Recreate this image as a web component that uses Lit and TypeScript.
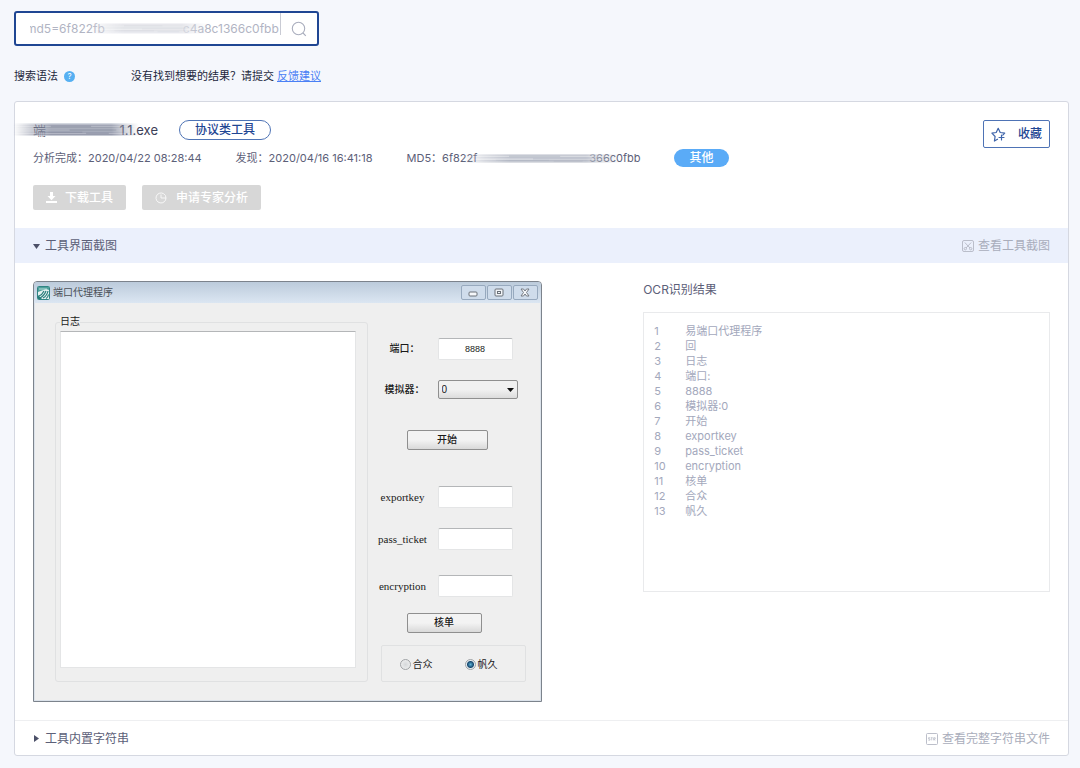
import { LitElement, html, css, svg } from "lit";
import { customElement, property } from "lit/decorators.js";

const OCR_LINES = [
  "易端口代理程序",
  "回",
  "日志",
  "端口:",
  "8888",
  "模拟器:0",
  "开始",
  "exportkey",
  "pass_ticket",
  "encryption",
  "核单",
  "合众",
  "帆久",
];

const base = css`
  *,
  *::before,
  *::after {
    box-sizing: border-box;
  }
  button,
  input,
  select,
  textarea {
    font: inherit;
    color: inherit;
    margin: 0;
    border-radius: 0;
    outline: none;
  }
  svg {
    display: block;
    flex: none;
  }
`;

/* Horizontal brush streaks that cover a redacted part of a string. */
@customElement("redaction-streak")
export class RedactionStreak extends LitElement {
  static styles = css`
    :host {
      display: block;
      pointer-events: none;
    }
    svg {
      display: block;
      width: 100%;
      height: 100%;
    }
  `;

  @property() tone = "dark";

  render() {
    const palettes: Record<string, string[]> = {
      dark: ["#d3d7df", "#b3b8c5", "#9499aa", "#a8adbb", "#7f8598", "#9fa5b4", "#8b90a3", "#a4a9b8", "#858b9e", "#b4b9c6", "#9297a8", "#c6cad4"],
      mid: ["#dfe1e7", "#c3c6d0", "#b4b8c4", "#d2d5dc", "#aeb3c0", "#ced1d9", "#babecb", "#d4d6dd", "#a9aebc", "#c0c4ce", "#b0b5c2", "#d9dbe1"],
      light: ["#f3f3f6", "#e7e8ec", "#dedfe5", "#e9eaee", "#d9dbe1", "#e1e2e7", "#dcdde3", "#ecedf0", "#d8dae0", "#e4e5ea", "#e8e9ed", "#f5f5f8"],
    };
    const colors = palettes[this.tone];
    return html`<svg viewBox="0 0 100 12" preserveAspectRatio="none" aria-hidden="true">
      <defs>
        <linearGradient id="f">
          <stop offset="0" stop-color="#fff" stop-opacity="0"></stop>
          <stop offset=".15" stop-color="#fff" stop-opacity=".6"></stop>
          <stop offset=".3" stop-color="#fff"></stop>
          <stop offset=".78" stop-color="#fff"></stop>
          <stop offset="1" stop-color="#fff" stop-opacity="0"></stop>
        </linearGradient>
        <mask id="m"><rect width="100" height="12" fill="url(#f)"></rect></mask>
      </defs>
      <g mask="url(#m)">
        ${colors.map((c, i) => svg`<rect x="0" y=${i} width="100" height="1.1" fill=${c}></rect>`)}
        <path d="M30 3H62M45 6.5H82M22 8.5H55M58 9.5H76" stroke=${colors[4]} stroke-width=".5"></path>
      </g>
    </svg>`;
  }
}

/* The captured window of the analysed program. */
@customElement("captured-window")
export class CapturedWindow extends LitElement {
  static styles = [
    base,
    css`
      :host {
        display: block;
        font: 10px/14px "Liberation Serif", "Noto Sans CJK SC", serif;
        color: #1a1a1a;
      }
      .window {
        border: 1px solid #7c838c;
        border-radius: 4px 4px 0 0;
        background: #efefef;
        box-shadow: inset 0 0 0 1px #dbe2ea;
      }
      .titlebar {
        height: 21px;
        display: flex;
        align-items: center;
        gap: 3px;
        padding: 0 3px;
        border-radius: 3px 3px 0 0;
        background: linear-gradient(#bccbdb, #dbe6f2);
        color: #4b5158;
      }
      .name {
        flex: 1;
      }
      .caption {
        display: flex;
        gap: 1px;
      }
      .caption button {
        width: 25px;
        height: 15px;
        display: grid;
        place-items: center;
        padding: 0;
        border: 1px solid #97a9be;
        border-radius: 2px;
        background: #cfdceb;
      }
      .body {
        display: grid;
        grid-template-columns: minmax(0, 1fr) 169px;
        column-gap: 4px;
        padding: 0 0 19px 21px;
      }
      .log {
        min-width: 0;
        margin: 12px 0 0;
        padding: 2px 11px 13px 4px;
        border: 1px solid #e0e1e2;
        border-radius: 3px;
      }
      .log legend {
        padding: 0;
        height: 14px;
      }
      .log textarea {
        display: block;
        width: 100%;
        height: 337px;
        resize: none;
        border: 1px solid #e4e5e6;
        border-top-color: #b4b6b8;
        background: #fff;
      }
      .form {
        display: grid;
        grid-template-rows: 42px 50px 56px 42px 47px 38px 32px 37px;
        padding-top: 35px;
      }
      .field {
        display: grid;
        grid-template-columns: 62px 80px;
        column-gap: 4px;
        align-items: center;
        align-self: start;
      }
      .field label {
        text-align: center;
        white-space: nowrap;
        font-weight: 500;
      }
      .cjk {
        padding-left: 4px;
      }
      .latin {
        font-size: 11px;
      }
      .field input {
        width: 75px;
        height: 22px;
        padding: 0;
        text-align: center;
        font-family: "Liberation Sans", sans-serif;
        font-size: 9px;
        border: 1px solid #e4e5e6;
        border-top-color: #b4b6b8;
        border-radius: 2px;
        background: #fff;
      }
      .pick {
        display: grid;
        align-items: center;
      }
      .pick > * {
        grid-area: 1 / 1;
      }
      .pick select {
        appearance: none;
        height: 19px;
        padding: 0 3px;
        border: 1px solid #8f8f8f;
        border-radius: 2px;
        background: linear-gradient(#f1f1f1 50%, #dcdcdc);
        font-family: "Liberation Sans", sans-serif;
      }
      .pick svg {
        justify-self: end;
        margin-right: 4px;
        pointer-events: none;
      }
      .push {
        justify-self: start;
        align-self: start;
        width: 81px;
        height: 20px;
        margin-left: 35px;
        padding: 0;
        border: 1px solid #8f8f8f;
        border-radius: 2px;
        background: linear-gradient(#f3f3f3 50%, #d9d9d9);
        font-weight: 500;
      }
      .narrow {
        width: 75px;
      }
      .choices {
        display: flex;
        align-items: center;
        gap: 32px;
        margin: 0 15px 0 9px;
        padding: 2px 0 0 18px;
        border: 1px solid #e0e1e2;
        border-radius: 2px;
      }
      .choices label {
        display: flex;
        align-items: center;
        gap: 2px;
      }
      .choices input {
        appearance: none;
        width: 11px;
        height: 11px;
        border: 1px solid #a0a3a6;
        border-radius: 50%;
        background: radial-gradient(#d5d8da, #f4f4f4);
      }
      .choices input:checked {
        background: radial-gradient(circle, #5fb4d8 0, #17486f 3px, #e8eef2 4px);
      }
    `,
  ];

  render() {
    return html`<div class="window">
      <div class="titlebar">
        <svg width="13" height="14" viewBox="0 0 13 14" aria-hidden="true">
          <rect x=".5" y=".5" width="12" height="13" rx="1" fill="#e5f2f0" stroke="#2f8583"></rect>
          <path d="M1 1h11v3L9 3 1 6z" fill="#4f9f9b"></path>
          <path d="M2 3h8" stroke="#b9dfda"></path>
          <path d="M2 10q3-1 5-5M3 12q4-2 6-7M6 12q4-2 5-7M9 12.500q2-1 2.500-4" fill="none" stroke="#277d7b" stroke-width="1.200"></path>
          <path d="M1 9v4h4z" fill="#277d7b"></path>
        </svg>
        <span class="name">端口代理程序</span>
        <div class="caption">
          <button type="button" aria-label="最小化">
            <svg width="10" height="9"><rect x="1" y="4" width="8" height="4" rx="1" fill="#f6f8fb" stroke="#6b7178"></rect></svg>
          </button>
          <button type="button" aria-label="最大化">
            <svg width="10" height="9"><rect x="1" y="1" width="8" height="7" rx="1" fill="#f0f3f7" stroke="#6b7178"></rect><rect x="3.500" y="3.500" width="3" height="2" fill="#f0f3f7" stroke="#6b7178"></rect></svg>
          </button>
          <button type="button" aria-label="关闭">
            <svg width="10" height="9"><path d="M1 1h2.500L5 3l1.500-2H9L6.500 4.500 9 8H6.500L5 6 3.500 8H1l2.500-3.500z" fill="#f6f8fb" stroke="#6b7178" stroke-width=".9"></path></svg>
          </button>
        </div>
      </div>
      <div class="body">
        <fieldset class="log">
          <legend>日志</legend>
          <textarea aria-label="日志"></textarea>
        </fieldset>
        <div class="form">
          <div class="field"><label class="cjk" for="port">端口：</label><input id="port" value="8888" /></div>
          <div class="field">
            <label class="cjk" for="emu">模拟器：</label>
            <div class="pick">
              <select id="emu"><option>0</option></select>
              <svg width="7" height="4" aria-hidden="true"><path d="M0 0h7L3.500 4z" fill="#111"></path></svg>
            </div>
          </div>
          <button class="push" type="button">开始</button>
          <div class="field"><label class="latin" for="ek">exportkey</label><input id="ek" /></div>
          <div class="field"><label class="latin" for="pt">pass_ticket</label><input id="pt" /></div>
          <div class="field"><label class="latin" for="en">encryption</label><input id="en" /></div>
          <button class="push narrow" type="button">核单</button>
          <div class="choices">
            <label><input type="radio" name="c" />合众</label>
            <label><input type="radio" name="c" checked />帆久</label>
          </div>
        </div>
      </div>
    </div>`;
  }
}

@customElement("app-root")
export class AppRoot extends LitElement {
  static styles = [
    base,
    css`
      :host {
        display: block;
        min-height: 100vh;
        padding: 11px 11px 12px 14px;
        background: #f5f7fc;
        color: #5c6078;
        font: 11px/20px Inter, "Noto Sans CJK SC", sans-serif;
      }
      .search {
        position: relative;
        display: flex;
        width: 305px;
        height: 35px;
        border: 2px solid #1f4693;
        border-radius: 3px;
        background: #fff;
        color: #b1b4c3;
      }
      .clip {
        flex: 1;
        min-width: 0;
        margin-left: 14px;
        overflow: hidden;
      }
      .clip input {
        width: 100%;
        height: 31px;
        padding: 0;
        border: 0;
        background: none;
        font-size: 12px;
        text-indent: -4px;
      }
      .search::after {
        content: "";
        position: absolute;
        top: 0;
        right: 36px;
        width: 1px;
        height: 22px;
        background: #c9cbd4;
      }
      .search redaction-streak {
        position: absolute;
        left: 72px;
        top: 10px;
        width: 120px;
        height: 11px;
      }
      .search button {
        width: 36px;
        display: grid;
        place-items: center;
        padding: 0;
        border: 0;
        background: none;
      }
      .hints {
        display: flex;
        align-items: center;
        margin: 20px 0 15px;
        color: #23273c;
      }
      .help {
        width: 11px;
        height: 11px;
        margin: 0 56px 0 6px;
        padding: 0;
        border: 0;
        border-radius: 50%;
        background: #56b0f2;
        color: #fff;
        font-size: 8px;
        line-height: 11px;
      }
      .hints a {
        margin-left: 3px;
        color: #4a80f5;
        text-decoration: underline;
      }
      .card {
        border: 1px solid #d5d8e1;
        border-radius: 3px;
        background: #fff;
      }
      .head {
        display: flex;
        justify-content: space-between;
        align-items: flex-start;
        padding: 18px;
      }
      .title {
        display: flex;
        align-items: center;
        gap: 21px;
        height: 20px;
        margin-bottom: 8px;
      }
      h1 {
        position: relative;
        display: flex;
        justify-content: space-between;
        width: 125px;
        margin: 0;
        font-size: 13px;
        font-weight: 400;
        color: #3c4058;
      }
      h1 redaction-streak {
        position: absolute;
        left: -20px;
        top: 3px;
        width: 126px;
        height: 13px;
      }
      .kind {
        padding: 0 15px;
        border: 1px solid #4e73b5;
        border-radius: 10px;
        color: #1f4693;
        font-size: 12px;
        line-height: 18px;
        font-weight: 500;
      }
      .meta {
        display: flex;
        flex-wrap: wrap;
        gap: 34px;
        margin-bottom: 17px;
      }
      .hash {
        position: relative;
        display: flex;
        gap: 112px;
      }
      .hash redaction-streak {
        position: absolute;
        left: 54px;
        top: 6px;
        width: 160px;
        height: 9px;
      }
      .other {
        align-self: center;
        padding: 0 15px;
        border-radius: 9px;
        background: #5aabf7;
        color: #fff;
        font-size: 12px;
        line-height: 18px;
        font-weight: 500;
      }
      .actions {
        display: flex;
        gap: 16px;
      }
      .actions button {
        display: flex;
        align-items: center;
        gap: 8px;
        height: 25px;
        padding: 0 13px;
        border: 0;
        border-radius: 2px;
        background: #d7d7d7;
        color: #fff;
        font-size: 12px;
        font-weight: 500;
      }
      .favorite {
        display: flex;
        align-items: center;
        gap: 12px;
        height: 28px;
        padding: 0 7px;
        border: 1px solid #4e73b5;
        border-radius: 2px;
        background: #fff;
        color: #1f4693;
        font-size: 12px;
        font-weight: 500;
      }
      .bar {
        display: flex;
        justify-content: space-between;
        align-items: center;
        height: 35px;
        padding: 1px 18px 0;
        font-size: 12px;
      }
      .open {
        background: #ebf0fc;
      }
      .closed {
        border-top: 1px solid #eeeff1;
      }
      .bar h2 {
        margin: 0;
        font-size: 12px;
        font-weight: 400;
      }
      .bar button {
        display: flex;
        align-items: center;
        gap: 5px;
        padding: 0;
        border: 0;
        background: none;
      }
      .bar a {
        display: flex;
        align-items: center;
        gap: 4px;
        color: #a9adbb;
        text-decoration: none;
      }
      .content {
        display: grid;
        grid-template-columns: minmax(0, 5fr) minmax(0, 4fr);
        column-gap: 10%;
        padding: 18px;
      }
      h3 {
        margin: 0 0 13px;
        font-size: 12px;
        line-height: 18px;
        font-weight: 400;
      }
      .ocr {
        list-style: none;
        min-height: 280px;
        margin: 0;
        padding: 11px 10px;
        border: 1px solid #e9eaec;
        line-height: 15px;
        color: #a3a8bc;
      }
      .ocr li {
        display: grid;
        grid-template-columns: 31px 1fr;
      }
    `,
  ];

  render() {
    return html`
      <form class="search" role="search" @submit=${(e: Event) => e.preventDefault()}>
        <div class="clip">
          <input aria-label="搜索" value=${"md5=6f822fb" + "\u2003".repeat(6) + "\u2002c4a8c1366c0fbb"} />
        </div>
        <redaction-streak tone="light"></redaction-streak>
        <button aria-label="搜索">
          <svg width="16" height="16" viewBox="0 0 16 16" fill="none" stroke="#a9adbd" stroke-width="1.100">
            <circle cx="7.500" cy="7.500" r="6.200"></circle>
            <path d="M12 12l2.800 2.800"></path>
          </svg>
        </button>
      </form>
      <div class="hints">
        <span>搜索语法</span>
        <button class="help" aria-label="帮助">?</button>
        <span>没有找到想要的结果？请提交</span>
        <a href="#feedback">反馈建议</a>
      </div>
      <main class="card">
        <header class="head">
          <div>
            <div class="title">
              <h1><span>端</span><span>1.1.exe</span><redaction-streak></redaction-streak></h1>
              <span class="kind">协议类工具</span>
            </div>
            <div class="meta">
              <span>分析完成：2020/04/22 08:28:44</span>
              <span>发现：2020/04/16 16:41:18</span>
              <span class="hash"><span>MD5：6f822f</span><span>366c0fbb</span><redaction-streak tone="mid"></redaction-streak></span>
              <span class="other">其他</span>
            </div>
            <div class="actions">
              <button type="button">
                <svg width="11" height="11" viewBox="0 0 11 11" fill="#fff">
                  <path d="M4 0h3v4h2.500L5.500 8.200 1.500 4H4zM0 9h11v2H0z"></path>
                </svg>
                下载工具
              </button>
              <button type="button">
                <svg width="13" height="12" viewBox="0 0 13 12" fill="none" stroke="#fff" stroke-width=".8">
                  <path d="M8.600 1.700A5 5 0 1 0 11 6H6V2.500"></path>
                  <path d="M8.600 1.700A5 5 0 0 1 11 6"></path>
                </svg>
                申请专家分析
              </button>
            </div>
          </div>
          <button class="favorite" type="button">
            <svg width="15" height="15" viewBox="0 0 15 15" fill="none" stroke="#3e64aa" stroke-width="1.200" stroke-linejoin="round" stroke-linecap="round">
              <path d="M6.500 12.200L3.400 14l.700-4.500L.900 6.200l4.300-.700L7.200 1.300l2 4.200 4.500.700-1.900 2"></path>
              <path d="M10.500 8v5M8 10.500h5"></path>
            </svg>
            收藏
          </button>
        </header>
        <section>
          <div class="bar open">
            <h2>
              <button type="button" aria-expanded="true">
                <svg width="7" height="6"><path d="M0 1h7L3.500 6z" fill="#4c5068"></path></svg>
                工具界面截图
              </button>
            </h2>
            <a href="#shots">
              <svg width="12" height="12" viewBox="0 0 12 12" fill="none" stroke="#b4b8c4" stroke-width=".9">
                <rect x=".5" y=".5" width="11" height="11" rx="1.500"></rect>
                <path d="M2.800 2.500L8 8M9.200 2.500L4 8"></path>
                <circle cx="3.300" cy="8.700" r="1.200"></circle>
                <circle cx="8.700" cy="8.700" r="1.200"></circle>
              </svg>
              查看工具截图
            </a>
          </div>
          <div class="content">
            <captured-window></captured-window>
            <div>
              <h3>OCR识别结果</h3>
              <ol class="ocr">
                ${OCR_LINES.map((line, i) => html`<li><span>${i + 1}</span><span>${line}</span></li>`)}
              </ol>
            </div>
          </div>
        </section>
        <section>
          <div class="bar closed">
            <h2>
              <button type="button" aria-expanded="false">
                <svg width="7" height="7"><path d="M1 0v7l5-3.500z" fill="#4c5068"></path></svg>
                工具内置字符串
              </button>
            </h2>
            <a href="#strings">
              <svg width="12" height="12" viewBox="0 0 12 12" fill="none" stroke="#b4b8c4" stroke-width=".9">
                <rect x=".5" y=".5" width="11" height="11" rx="1"></rect>
                <path d="M4 4.700H2.500v1.200H4v1.300H2.300M4.700 4.700h2M5.700 4.700v2.700M7.700 7.400V4.700h1.500v1.400H7.700l1.600 1.300" stroke-width=".7"></path>
              </svg>
              查看完整字符串文件
            </a>
          </div>
        </section>
      </main>
    `;
  }
}
